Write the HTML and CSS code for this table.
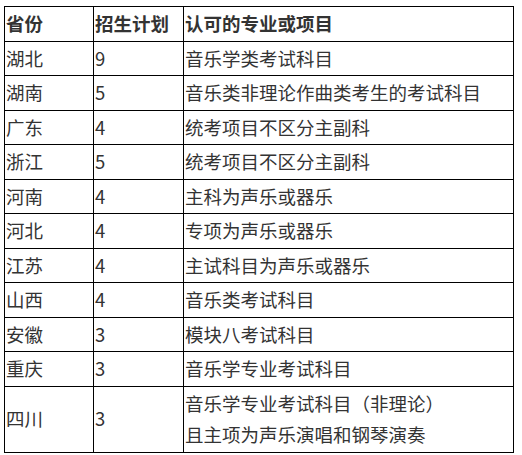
FILE: index.html
```html
<!DOCTYPE html>
<html lang="zh-CN">
<head>
<meta charset="utf-8">
<title>招生计划</title>
<link rel="stylesheet" href="styles.css">
</head>
<body>
<table class="plan">
  <colgroup>
    <col class="c1"><col class="c2"><col class="c3">
  </colgroup>
  <thead>
    <tr><th>省份</th><th>招生计划</th><th>认可的专业或项目</th></tr>
  </thead>
  <tbody>
    <tr><td>湖北</td><td>9</td><td>音乐学类考试科目</td></tr>
    <tr><td>湖南</td><td>5</td><td>音乐类非理论作曲类考生的考试科目</td></tr>
    <tr><td>广东</td><td>4</td><td>统考项目不区分主副科</td></tr>
    <tr><td>浙江</td><td>5</td><td>统考项目不区分主副科</td></tr>
    <tr><td>河南</td><td>4</td><td>主科为声乐或器乐</td></tr>
    <tr><td>河北</td><td>4</td><td>专项为声乐或器乐</td></tr>
    <tr><td>江苏</td><td>4</td><td>主试科目为声乐或器乐</td></tr>
    <tr><td>山西</td><td>4</td><td>音乐类考试科目</td></tr>
    <tr><td>安徽</td><td>3</td><td>模块八考试科目</td></tr>
    <tr><td>重庆</td><td>3</td><td>音乐学专业考试科目</td></tr>
    <tr><td>四川</td><td>3</td><td>音乐学专业考试科目（非理论）<br>且主项为声乐演唱和钢琴演奏</td></tr>
  </tbody>
</table>
</body>
</html>
```
FILE: styles.css
```css
html, body {
  background: #fff;
}
body {
  margin: 6px 0 0 4px;
  font-family: "Noto Sans CJK SC", "Noto Sans", sans-serif;
  font-size: 18.5px;
  color: #333;
}
.plan {
  border-collapse: collapse;
  width: 509px;
  table-layout: fixed;
}
.plan .c1 { width: 89px; }
.plan .c2 { width: 90px; }
.plan .c3 { width: 330px; }
.plan th,
.plan td {
  border: 1px solid #000;
  padding: 1px 1px;
  line-height: 31.5px;
  text-align: left;
  vertical-align: middle;
  white-space: nowrap;
}
.plan th {
  font-weight: bold;
}
.plan td {
  font-weight: normal;
}
```
